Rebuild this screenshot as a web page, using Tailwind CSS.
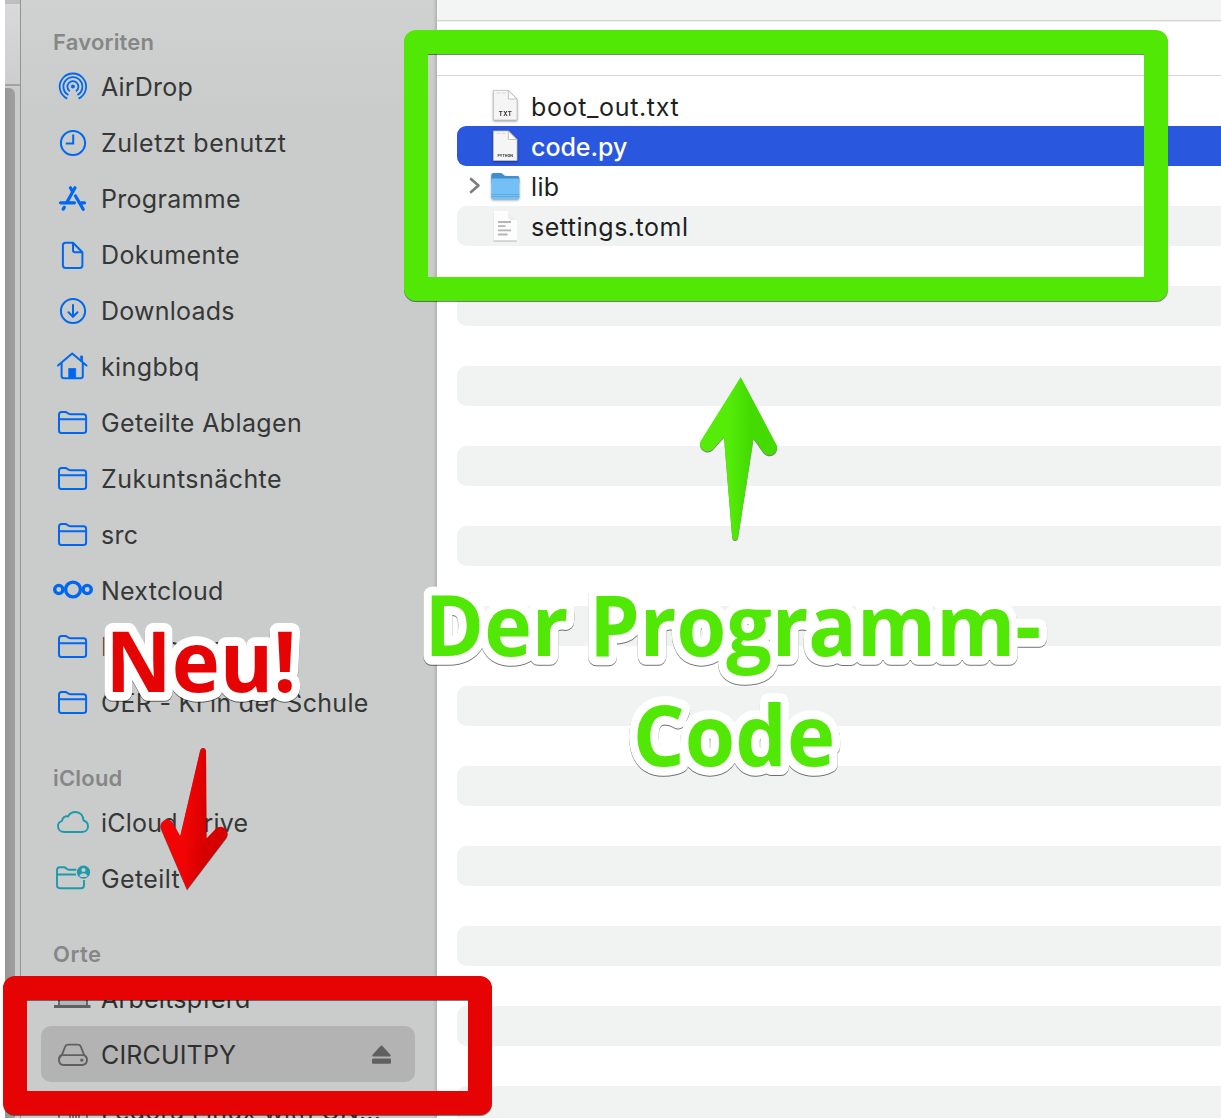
<!DOCTYPE html>
<html lang="de">
<head>
<meta charset="utf-8">
<title>Finder</title>
<script src="https://cdn.jsdelivr.net/npm/@tailwindcss/browser@4"></script>
</head>
<body class="relative h-[1119px] w-[1221px] overflow-hidden bg-white font-[Inter,sans-serif]">

<svg class="hidden">
  <defs>
    <symbol id="folder" viewBox="0 0 40 40">
      <path d="M6 28V11.600Q6 9 8.600 9H12.200C14.500 9 14.600 11.200 17 11.200H30.500Q33.100 11.200 33.100 13.800V27.500Q33.100 30.100 30.500 30.100H8.600Q6 30.100 6 27.500M6 16.200H33" fill="none" stroke="currentColor" stroke-width="2"/>
    </symbol>
    <symbol id="page" viewBox="0 0 28 34">
      <path d="M2 2H17L25.500 10.500V31.500H2Z" fill="#f5f5f5" stroke="#c4c4c4" stroke-width=".8"/>
      <path d="M16.800 2V10.500H25.300Z" fill="#fff" stroke="#b4b4b4" stroke-width=".8"/>
      <path d="M5 4.500H9M10.500 4.500H14" stroke="#ccc" stroke-width=".7"/>
    </symbol>
  </defs>
</svg>

<div class="flex h-[1118px] w-full overflow-hidden pl-[5px]">
  <!-- window behind -->
  <div class="flex w-[15px] shrink-0 flex-col bg-[#cbcacc]">
    <div class="h-1 bg-[#bebec0]"></div>
    <div class="h-[82px] border-b-2 border-[#a4a4a4] bg-linear-to-b from-[#d9d9db] to-[#cdccce]"></div>
    <div class="mt-[2px] w-[10px] flex-1 rounded-tr-md bg-linear-to-r from-[#969696] to-[#a0a0a0]"></div>
  </div>

  <!-- sidebar -->
  <aside class="w-[416px] shrink-0 border-l border-[#949494] bg-linear-to-b from-[#d0d2d1] to-[#cacccb] to-10% text-[25px] text-[#363737] shadow-[inset_-3px_0_3px_-2px_#b2b4b3]">
    <h2 class="flex h-[59px] items-center pt-[25px] pl-8 text-[22px] font-semibold tracking-[.2px] text-[#858787]">Favoriten</h2>
    <ul class="text-[#0068f0] [&>li]:flex [&>li]:h-14 [&>li]:items-center [&>li]:gap-2 [&>li]:whitespace-nowrap [&>li]:pl-8 [&_span]:pt-0.5 [&_span]:text-[#363737] [&_svg]:size-10 [&_svg]:shrink-0">
      <li><svg viewBox="0 0 40 40" fill="none" stroke="currentColor" stroke-width="1.800"><path d="M14.200 31.600A13.200 13.200 0 1 1 25.600 31.600M15.400 28A9.500 9.500 0 1 1 24.400 28M16.800 24.200A5.500 5.500 0 1 1 23 24.200"/><circle cx="19.900" cy="19.600" r="2" fill="currentColor" stroke="none"/></svg><span class="tracking-[.2px]">AirDrop</span></li>
      <li><svg viewBox="0 0 40 40" fill="none" stroke="currentColor" stroke-width="2"><circle cx="20" cy="20" r="12.100"/><path d="M20.200 11.500V20.500H12.800"/></svg><span class="tracking-[.5px]">Zuletzt benutzt</span></li>
      <li><svg viewBox="0 0 40 40" fill="none" stroke="currentColor" stroke-width="3.200" stroke-linecap="round"><path d="M22 8.800L14.200 22.700M17.400 8.800L19.800 13M22.500 17L30.200 30.300M11.300 28.300L10.200 30.100M7.500 23.800H21.500M28 23.800H31.500"/></svg><span class="tracking-[.3px]">Programme</span></li>
      <li><svg viewBox="0 0 40 40" fill="none" stroke="currentColor" stroke-width="2" stroke-linejoin="round"><path d="M20 7.800H12.500Q9.900 7.800 9.900 10.500V30.300Q9.900 33 12.500 33H26.800Q29.400 33 29.400 30.300V17.300L20 7.800V15Q20 17.200 22.200 17.200H29.500"/></svg><span class="tracking-[.41px]">Dokumente</span></li>
      <li><svg viewBox="0 0 40 40" fill="none" stroke="currentColor" stroke-width="2" stroke-linecap="round"><circle cx="20" cy="20" r="12.100"/><path d="M20 14V25.500M15.500 21.300L20 25.800L24.500 21.300"/></svg><span class="tracking-[.22px]">Downloads</span></li>
      <li><svg viewBox="0 0 40 40" fill="none" stroke="currentColor" stroke-width="2" stroke-linecap="round" stroke-linejoin="round"><path d="M5 18.500L19.200 6.500L33.500 18.500M8.600 16V29Q8.600 31.300 10.900 31.300H27.500Q29.800 31.300 29.800 29V16"/><path d="M16 21.500H22.700V31H16ZM27.800 9H29.600V14.500L27.800 13Z" fill="currentColor" stroke-width=".8"/></svg><span class="tracking-[.4px]">kingbbq</span></li>
      <li><svg><use href="#folder"/></svg><span class="tracking-[.38px]">Geteilte Ablagen</span></li>
      <li><svg><use href="#folder"/></svg><span class="tracking-[.44px]">Zukuntsnächte</span></li>
      <li><svg><use href="#folder"/></svg><span class="tracking-[.3px]">src</span></li>
      <li><svg viewBox="0 0 40 40" fill="none" stroke="currentColor" stroke-width="3.400"><circle cx="20" cy="18.500" r="7.400"/><circle cx="5.800" cy="18.500" r="4.100"/><circle cx="34.200" cy="18.500" r="4.100"/></svg><span class="tracking-[.25px]">Nextcloud</span></li>
      <li><svg><use href="#folder"/></svg><span>Programmtest</span></li>
      <li><svg><use href="#folder"/></svg><span class="tracking-[.3px]">OER - KI in der Schule</span></li>
    </ul>

    <h2 class="flex h-16 items-center pt-[30px] pl-8 text-[22px] font-semibold tracking-[.2px] text-[#858787]">iCloud</h2>
    <ul class="text-[#1c9aac] [&>li]:flex [&>li]:h-14 [&>li]:items-center [&>li]:gap-2 [&>li]:whitespace-nowrap [&>li]:pl-8 [&_span]:pt-0.5 [&_span]:text-[#363737] [&_svg]:size-10 [&_svg]:shrink-0">
      <li><svg viewBox="0 0 40 40" fill="none" stroke="currentColor" stroke-width="1.900" stroke-linejoin="round"><path d="M11.500 29H28.500C32.500 29 35 26.700 35 23.400C35 20.500 33.300 18.300 30.500 17.500C30.500 12.500 27 9 22.500 9C19 9 16.400 10.800 15 13.500C12.200 12.700 9.500 14.500 9 17.800C6.500 18.500 5 20.600 5 23.200C5 26.500 7.500 29 11.500 29Z"/></svg><span class="tracking-[.24px]">iCloud Drive</span></li>
      <li><svg viewBox="0 0 40 40" fill="none" stroke="currentColor" stroke-width="1.900"><path d="M23.300 10.700H15.800C13.500 10.700 13.300 8.300 10.800 8.300H6.800Q4 8.300 4 11V26.300Q4 29.200 7 29.200H28.200Q31 29.200 31 26.500V21M4 15.500H23"/><circle cx="30.500" cy="13.200" r="6.600" fill="currentColor" stroke="none"/><circle cx="30.500" cy="11" r="2.100" fill="#cacccb" stroke="none"/><path d="M26.300 17.200Q27.500 14.200 30.500 14.200T34.700 17.200Q30.500 19 26.300 17.200Z" fill="#cacccb" stroke="none"/></svg><span class="tracking-[.4px]">Geteilt</span></li>
    </ul>

    <h2 class="flex h-[63px] items-center pt-[31px] pl-8 text-[22px] font-semibold tracking-[.47px] text-[#858787]">Orte</h2>
    <ul class="text-[#606060] [&>li]:flex [&>li]:h-14 [&>li]:items-center [&>li]:gap-2 [&>li]:whitespace-nowrap [&_span]:pt-1 [&_span]:text-[#2f3030] [&_svg]:size-10 [&_svg]:shrink-0">
      <li class="pl-8"><svg viewBox="0 0 40 40" fill="#b4b5b5" stroke="currentColor"><path d="M6 27.500V10H34V27.500" stroke-width="1.800"/><path d="M1 28.500H37.500" stroke-width="2.800"/></svg><span class="tracking-[.23px]">Arbeitspferd</span></li>
      <li class="ml-5 mr-[21px] rounded-[10px] bg-[#b3b3b3] pl-3"><svg viewBox="0 0 40 40" fill="none" stroke="currentColor" stroke-width="1.900" stroke-linejoin="round"><path d="M9.300 20L12.200 12.500Q13 10.600 15.500 10.600H24.500Q27 10.600 27.800 12.500L30.700 20M10.500 21.100H29.500Q34 21.100 34 25.800T29.500 31H10.500Q6 31 6 25.800T10.500 21.100M6.500 24L9.300 20M33.500 24L30.700 20"/><circle cx="28.800" cy="26.100" r="1.700" fill="currentColor" stroke="none"/></svg><span class="flex-1 tracking-[.16px]">CIRCUITPY</span>
        <svg class="mr-[13px]" viewBox="0 0 40 40" fill="currentColor"><path d="M18.500 12Q19.500 11 20.500 12L28.400 20.700Q29.500 22.500 28 22.500H11Q9.500 22.500 10.600 20.700Z"/><rect x="10" y="24.500" width="19" height="5.300" rx="1.200"/></svg></li>
      <li class="pl-8"><svg viewBox="0 0 40 40" fill="none" stroke="currentColor" stroke-width="1.600"><path d="M6 8H34V34H6ZM17 8V30M20 8V30M23 8V30M26 8V30"/></svg><span class="tracking-[.22px]">Fedora Linux with GN...</span></li>
    </ul>
  </aside>

  <!-- file list -->
  <main class="min-w-0 flex-1 border-l border-[#b4b6b5] bg-white text-[25px] text-[#1e1f1f]">
    <div class="h-[21px] border-b border-[#d4d5d5] bg-[#f3f5f5]"></div>
    <div class="h-[55px] border-y border-t-[#efefef] border-b-[#d6d6d6]"></div>
    <div class="mt-[10px] [&_span]:pt-[3px] [&>div]:ml-5 [&>div]:flex [&>div]:h-10 [&>div]:items-center [&>div]:rounded-l-[9px] [&>div:nth-child(even)]:bg-[#f1f3f3]">
      <div class="pl-[34px]"><svg class="mr-[12px] h-[34px] w-7 drop-shadow-[0_1px_1px_rgba(0,0,0,.4)]" viewBox="-.5 .5 28 34"><use href="#page" width="28" height="34"/><text x="14" y="27.500" text-anchor="middle" font-size="6" font-weight="700" letter-spacing=".4" fill="#333">TXT</text></svg><span class="tracking-[.65px]">boot_out.txt</span></div>
      <div class="!bg-[#2957de] pl-[34px] text-white"><svg class="mr-[12px] h-[34px] w-7 drop-shadow-[0_1px_1px_rgba(0,0,0,.4)]" viewBox="-.5 0 28 34"><use href="#page" width="28" height="34"/><text x="13.700" y="27.500" text-anchor="middle" font-size="3.600" font-weight="700" fill="#333">PYTHON</text></svg><span class="font-medium tracking-[-.05px]">code.py</span></div>
      <div class="pl-3"><svg class="mr-[9px] h-5 w-3" viewBox="0 0 12 20"><path d="M2 3.500L9.500 10L2 16.500" transform="translate(0 -.5)" fill="none" stroke="#7d7d7d" stroke-width="2.600" stroke-linecap="round" stroke-linejoin="round"/></svg><svg class="mr-[11px] h-[30px] w-[30px] drop-shadow-[0_1px_1px_rgba(0,0,0,.35)]" viewBox="-.3 0 30 30"><path d="M1 4Q1 2 3 2H10Q12 2 13 3.500T16 5H27Q29 5 29 7V12H1Z" fill="#3f8fcd"/><path d="M1 9Q1 7.500 2.500 7.500H27.500Q29 7.500 29 9V26.500Q29 28.500 27 28.500H3Q1 28.500 1 26.500Z" fill="#74bff6"/><path d="M1 23.500H29M1 25.500H29" stroke="#5ba6df" stroke-width=".8"/></svg><span class="tracking-[.35px]">lib</span></div>
      <div class="pl-[34px]"><svg class="mr-[12px] h-[34px] w-7 drop-shadow-[0_1px_.5px_rgba(0,0,0,.25)]" viewBox="-.5 0 28 34"><path d="M2 2H16.500L25.500 11V31.500H2Z" fill="#fdfdfd"/><path d="M16.500 2.500V8Q16.500 11 19.500 11H25.500Z" fill="#eee"/><path d="M6.500 13H19.500M6.500 17.200H14M6.500 21.300H19.500M6.500 25.500H16" stroke="#b4b5b5" stroke-width="1.800"/></svg><span class="tracking-[.5px]">settings.toml</span></div>
      <div></div><div></div><div></div><div></div><div></div><div></div><div></div><div></div><div></div><div></div><div></div><div></div><div></div><div></div><div></div><div></div><div></div><div></div><div></div><div></div><div></div><div></div>
    </div>
  </main>
</div>

<!-- annotations over the window -->
<div class="absolute top-[30px] left-[404px] h-[271px] w-[764px] rounded-xl border-24 border-[#52e805] drop-shadow-[0_1px_0_rgba(0,0,0,.5)]"></div>
<div class="absolute top-[976px] left-[3px] h-[139px] w-[489px] rounded-xl border-24 border-[#e60303] drop-shadow-[0_1px_0_rgba(0,0,0,.5)]"></div>

<svg class="absolute inset-0 h-[1119px] w-[1221px] font-['Open_Sans',sans-serif] font-bold" viewBox="0 0 1221 1119">
  <defs>
    <linearGradient id="green" x1="0" x2="1"><stop offset=".36" stop-color="#55ed08"/><stop offset=".65" stop-color="#43db02"/></linearGradient>
    <linearGradient id="red" x1="0" x2="1" gradientTransform="rotate(8 .5 .5)"><stop offset=".38" stop-color="#f20404"/><stop offset=".68" stop-color="#d60000"/></linearGradient>
  </defs>
  <g class="drop-shadow-[0_1px_0_rgba(0,0,0,.5)]">
    <path fill="url(#green)" d="M740.700 377L775.800 443.500A7.500 7.500 0 0 1 763.200 452L753.500 438.500L738 537.500Q737.500 540 735 540Q732.500 540 732.200 537.500L724 437L712.600 449.500A7.500 7.500 0 0 1 700.700 441Z"/>
    <path fill="url(#red)" d="M187 889.500L161.300 829.500A6.500 6.500 0 0 1 173 823L180.200 836L200 751Q200.700 748 203 748Q206 748 206 751.500L206.500 838.500L216 828.500A7 7 0 0 1 226.500 837.500Z"/>
  </g>
  <g font-size="85" stroke="#fff" stroke-width="17.500" stroke-linejoin="round" paint-order="stroke" class="drop-shadow-[0_1px_.4px_rgba(0,0,0,.55)]">
    <text transform="translate(424.500 656.300) scale(.948 1)" fill="#52e805">Der Programm-</text>
    <text transform="translate(632.800 766) scale(.96 1)" fill="#52e805">Code</text>
    <text transform="translate(105.600 692) scale(.957 1)" fill="#e60303">Neu!</text>
  </g>
</svg>
</body>
</html>
